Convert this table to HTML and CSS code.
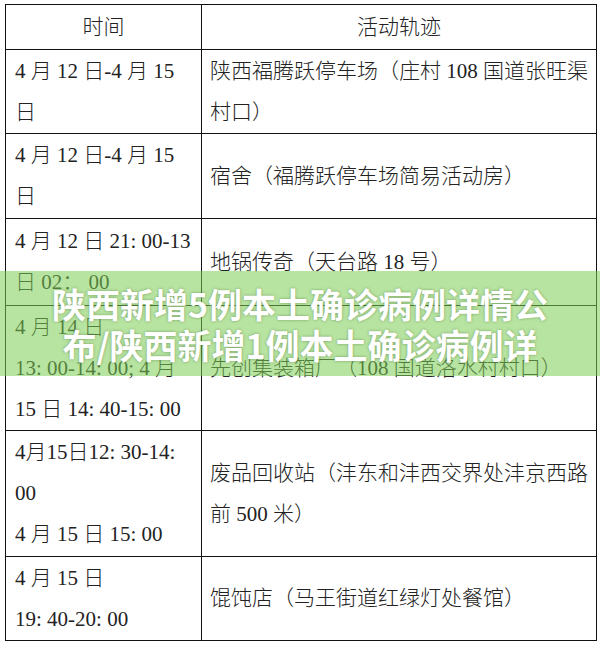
FILE: index.html
```html
<!DOCTYPE html>
<html lang="zh-CN">
<head>
<meta charset="utf-8">
<title>陕西新增5例本土确诊病例详情公布</title>
<link rel="stylesheet" href="styles.css">
</head>
<body>
<div class="page">
  <table class="trace">
    <colgroup><col class="c-time"><col class="c-place"></colgroup>
    <tr class="r-head">
      <th>时间</th>
      <th>活动轨迹</th>
    </tr>
    <tr class="r-84">
      <td class="t">4 月 12 日-4 月 15<br>日</td>
      <td class="p">陕西福腾跃停车场（庄村 108 国道张旺渠<br>村口）</td>
    </tr>
    <tr class="r-85">
      <td class="t">4 月 12 日-4 月 15<br>日</td>
      <td class="p">宿舍（福腾跃停车场简易活动房）</td>
    </tr>
    <tr class="r-87">
      <td class="t">4 月 12 日 21: 00-13<br>日 02：&nbsp;00</td>
      <td class="p">地锅传奇（天台路 18 号）</td>
    </tr>
    <tr class="r-125">
      <td class="t">4 月 14 日<br>13: 00-14: 00; 4 月<br>15 日 14: 40-15: 00</td>
      <td class="p">先创集装箱厂（108 国道洛水村村口）</td>
    </tr>
    <tr class="r-126">
      <td class="t">4月15日12: 30-14:<br>00<br>4 月 15 日 15: 00</td>
      <td class="p">废品回收站（沣东和沣西交界处沣京西路<br>前 500 米）</td>
    </tr>
    <tr class="r-84">
      <td class="t">4 月 15 日<br>19: 40-20: 00</td>
      <td class="p">馄饨店（马王街道红绿灯处餐馆）</td>
    </tr>
  </table>
  <div class="banner">
    <h1 class="banner-title">陕西新增5例本土确诊病例详情公<br>布/陕西新增1例本土确诊病例详</h1>
  </div>
</div>
</body>
</html>
```

FILE: styles.css
```css
html, body {
  margin: 0;
  padding: 0;
  background: #ffffff;
}

.page {
  position: relative;
  width: 600px;
  height: 646px;
  overflow: hidden;
  padding: 4px 0 0 5px;
  box-sizing: border-box;
}

.trace {
  border-collapse: collapse;
  table-layout: fixed;
  width: 591px;
  font-family: "Liberation Serif", "Noto Sans CJK SC", serif;
  font-size: 21px;
  font-weight: 300;
  color: #222;
}

.c-time { width: 196px; }
.c-place { width: 395px; }

.trace th,
.trace td {
  border: 1px solid #111;
  padding: 0;
  vertical-align: middle;
  white-space: nowrap;
  line-height: 41px;
}

.trace th {
  font-weight: 300;
  text-align: center;
}

.trace td.t { padding-left: 9px; text-align: left; }
.trace td.p { padding-left: 8px; text-align: left; }

.r-head { height: 45px; }
.r-84 { height: 84px; }
.r-85 { height: 85px; }
.r-87 { height: 87px; }
.r-125 { height: 125px; }
.r-126 { height: 126px; }

.banner {
  position: absolute;
  left: 0;
  right: 0;
  top: 271px;
  height: 105px;
  background: rgba(125, 205, 85, 0.55);
  box-sizing: border-box;
  padding-top: 12px;
}

.banner-title {
  margin: 0;
  font-family: "Noto Sans CJK SC", "Noto Sans", sans-serif;
  font-weight: 700;
  font-size: 34px;
  line-height: 41px;
  color: #ffffff;
  text-align: center;
  text-shadow: 0 0 3px rgba(60, 100, 40, 0.55);
}
```
